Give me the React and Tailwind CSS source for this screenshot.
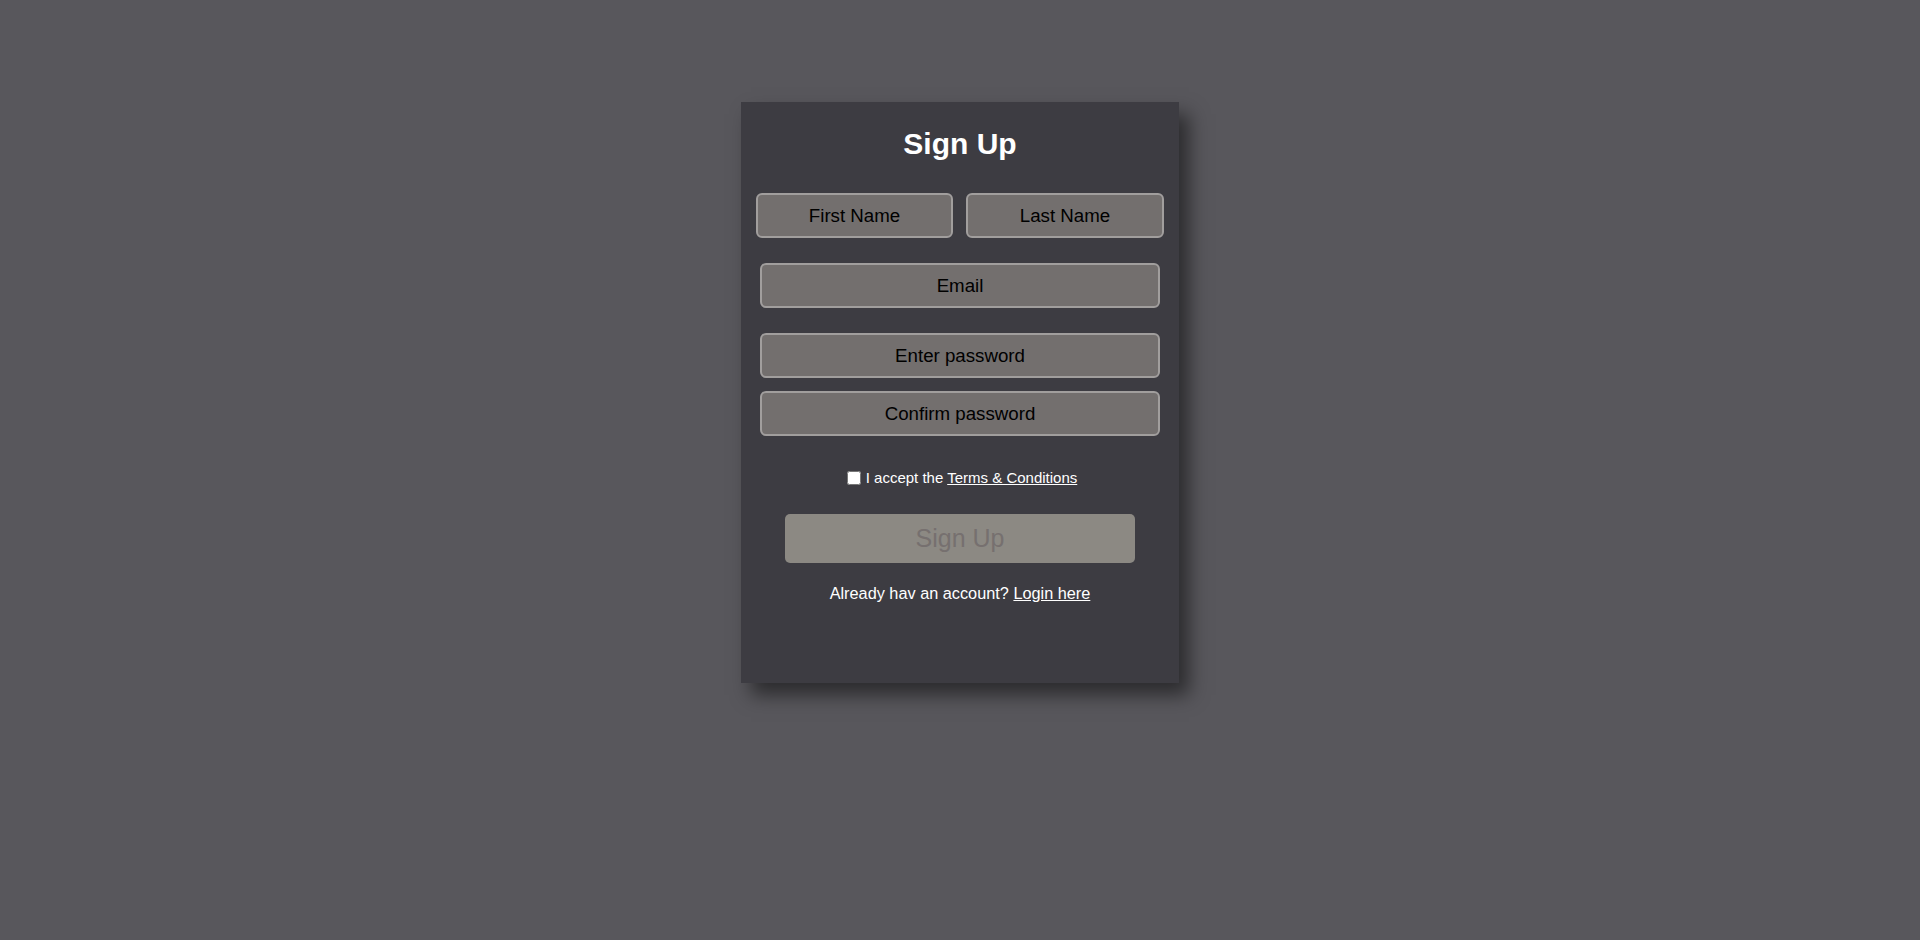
import React, { useState } from "react";

function Field({ placeholder, type = "text", className = "" }) {
  return (
    <input
      type={type}
      placeholder={placeholder}
      className={`h-[45px] rounded-[6px] border-2 border-[#a19e9d] bg-[#736f6e] text-center text-[18.7px] text-black outline-none placeholder:text-black ${className}`}
    />
  );
}

export default function App() {
  const [accepted, setAccepted] = useState(false);

  return (
    <div
      className="min-h-[940px] w-full bg-[#58575c] pt-[102px]"
      style={{ fontFamily: '"Liberation Sans", Arial, sans-serif' }}
    >
      <div className="mx-auto flex h-[581px] w-[438px] flex-col items-center bg-[#3d3c42] pt-[24px] shadow-[10px_12px_18px_rgba(0,0,0,0.5)]">
        <h1 className="text-[30px] font-bold leading-[35px] text-white">Sign Up</h1>

        <div className="mt-[32px] flex w-[408px] gap-[13px]">
          <Field placeholder="First Name" className="w-[197px]" />
          <Field placeholder="Last Name" className="w-[198px]" />
        </div>

        <Field placeholder="Email" type="email" className="mt-[25px] w-[400px]" />
        <Field placeholder="Enter password" type="password" className="mt-[25px] w-[400px]" />
        <Field placeholder="Confirm password" type="password" className="mt-[13px] w-[400px]" />

        <label className="mt-[33px] ml-[4px] flex items-center text-[15px] leading-[18px] text-white">
          <input
            type="checkbox"
            checked={accepted}
            onChange={(e) => setAccepted(e.target.checked)}
            className="mr-[5px] h-[14px] w-[14px]"
          />
          <span>
            I accept the{" "}
            <a href="#" className="underline">
              Terms &amp; Conditions
            </a>
          </span>
        </label>

        <button
          disabled={!accepted}
          className="mt-[27px] h-[49px] w-[350px] rounded-[5px] bg-[#8c8983] text-[25px] text-[#76706f]"
        >
          Sign Up
        </button>

        <p className="mt-[18px] text-[16.3px] text-white">
          Already hav an account?{" "}
          <a href="#" className="underline">
            Login here
          </a>
        </p>
      </div>
    </div>
  );
}
